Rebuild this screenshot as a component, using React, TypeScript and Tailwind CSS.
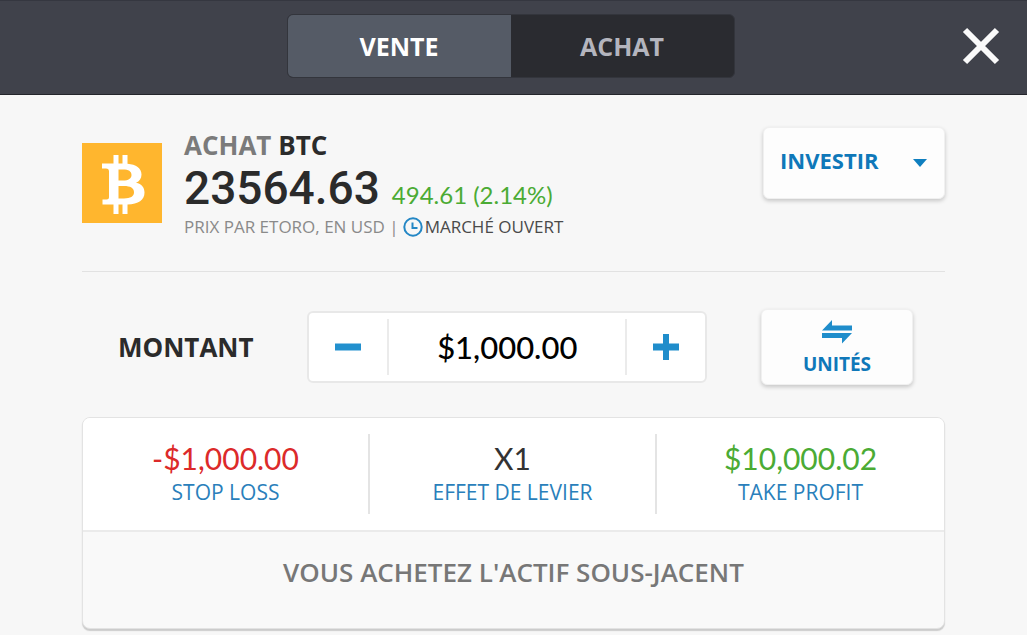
import { useState } from "react";

const LIMITS = [
  { label: "STOP LOSS", value: "-$1,000.00", color: "text-[#dc2a2a]" },
  { label: "EFFET DE LEVIER", value: "X1", color: "text-[#333333]" },
  { label: "TAKE PROFIT", value: "$10,000.02", color: "text-[#4bab34]" },
];

function formatAmount(amount: number) {
  return amount.toLocaleString("en-US", { style: "currency", currency: "USD" });
}

function BitcoinLogo() {
  return (
    <svg viewBox="0 0 80 80" className="mt-4 size-20 shrink-0" aria-label="Bitcoin">
      <rect width="80" height="80" fill="#ffb62e" />
      <path
        fill="#fff"
        fillRule="evenodd"
        d="M20 20.5H31.500V12H36.500V20.500H40.500V12H45.500V20.700C54 21.300 59.500 25.300 59.500 31.500C59.500 35.500 57.500 38.400 54 39.800C59.800 41 62.500 44.500 62.500 49.500C62.500 57 56.500 61.200 45.500 61.500V71H40.500V61.500H36.500V71H31.500V61.500H20.500V56.500H24.500C26.500 56.500 27 55.500 27 54V28.500C27 26.500 26 25.500 24 25.500H20ZM36.500 26.500V37.500H41C46.500 37.500 49.500 35.500 49.500 32C49.500 28.300 46.500 26.500 41 26.500ZM36.500 43V55.500H42C48.500 55.500 52 53.500 52 49.300C52 45 48.500 43 42 43Z"
      />
    </svg>
  );
}

function ClockIcon() {
  return (
    <svg viewBox="0 0 20 20" className="size-5" fill="none" stroke="#2487c5" strokeWidth="2">
      <circle cx="10" cy="10" r="8.700" />
      <path d="M9.500 5.500V11H14.500" />
    </svg>
  );
}

function SwapIcon() {
  return (
    <svg viewBox="0 0 30 24" className="h-6 w-[30px] shrink-0" fill="#1f8dcb">
      <path d="M0 10.500 10 0V5.500H30V10.500Z" />
      <path d="M30 13 20 23.500V18H0V13Z" />
    </svg>
  );
}

export default function App() {
  const [side, setSide] = useState("VENTE");
  const [amount, setAmount] = useState(1000);

  return (
    <div className="min-h-screen bg-[#f7f7f7] font-['Open_Sans',sans-serif] text-[#2b2b2b]">
      <header className="grid h-[95px] grid-cols-[1fr_448px_1fr] items-center border-t border-b border-t-[#353740] border-b-[#24252b] bg-[#40424b] pr-1.5 pb-1">
        <div className="col-start-2 flex h-16 overflow-hidden rounded-md border border-[#33353c] bg-[#2a2b30]">
          {["VENTE", "ACHAT"].map((name) => (
            <button
              key={name}
              type="button"
              onClick={() => setSide(name)}
              className={`flex-1 text-[25px] leading-8 font-bold ${
                side === name ? "bg-[#555b66] text-white" : "text-[#b4b5be]"
              }`}
            >
              {name}
            </button>
          ))}
        </div>
        <button type="button" aria-label="Fermer" className="mr-5 justify-self-end">
          <svg viewBox="0 0 40 40" className="size-10" stroke="#fafafa" strokeWidth="6">
            <path d="M4 4 36 36M36 4 4 36" />
          </svg>
        </button>
      </header>

      <main className="px-[82px] pt-8">
        <section className="flex items-start justify-between border-b border-[#e2e2e2] pb-8">
          <div className="flex items-start gap-[22px]">
            <BitcoinLogo />
            <div className="mt-0.5">
              <h1 className="text-[26px] leading-8 font-bold text-[#7b7b7b]">
                ACHAT <span className="text-[#2b2b2b]">BTC</span>
              </h1>
              <p className="flex items-baseline gap-3 leading-[54px]">
                <span className="font-[Roboto,sans-serif] text-[46px] font-medium">23564.63</span>
                <span className="font-[Lato,sans-serif] text-2xl leading-8 text-[#4bab34]">494.61 (2.14%)</span>
              </p>
              <p className="flex items-center gap-1 text-[17px] leading-6 text-[#8a8a8a]">
                PRIX PAR ETORO, EN USD |
                <span className="flex items-center gap-0.5 text-[#4a4a4a]">
                  <ClockIcon />
                  MARCHÉ OUVERT
                </span>
              </p>
            </div>
          </div>

          <div className="relative">
            <select
              aria-label="Mode"
              className="h-[72px] w-[182px] appearance-none rounded-md border border-[#f0f0f0] bg-[#fdfdfd] pb-1.5 pl-4 text-[22px] font-bold text-[#0f78b9] shadow-[0_2px_4px_rgba(0,0,0,0.2)]"
            >
              <option>INVESTIR</option>
            </select>
            <svg
              viewBox="0 0 14 8"
              className="pointer-events-none absolute top-8 right-[18px] h-2 w-3.5"
              fill="#0f7fbf"
            >
              <path d="M0 0H14L7 8Z" />
            </svg>
          </div>
        </section>

        <section className="flex items-center justify-between pt-[37px] pr-8 pb-8 pl-9">
          <label htmlFor="amount" className="text-[26px] leading-9 font-bold">
            MONTANT
          </label>
          <div className="flex h-[72px] w-[400px] items-center rounded-md border-2 border-[#e8e8e8] bg-white">
            <button
              type="button"
              aria-label="Diminuer"
              onClick={() => setAmount(Math.max(0, amount - 100))}
              className="flex h-full w-[78px] items-center justify-center"
            >
              <svg viewBox="0 0 26 26" className="size-[26px]" fill="#2290ce">
                <path d="M0 9.500H26V16.500H0Z" />
              </svg>
            </button>
            <input
              id="amount"
              type="text"
              readOnly
              value={formatAmount(amount)}
              className="h-14 min-w-0 flex-1 border-x-2 border-[#ebebeb] text-center font-[Lato,sans-serif] text-[31px] font-medium text-black outline-none"
            />
            <button
              type="button"
              aria-label="Augmenter"
              onClick={() => setAmount(amount + 100)}
              className="flex h-full w-[78px] items-center justify-center"
            >
              <svg viewBox="0 0 26 26" className="size-[26px]" fill="#1f8dcb">
                <path d="M10 0H16V9.500H26V16.500H16V26H10V16.500H0V9.500H10Z" />
              </svg>
            </button>
          </div>
          <button
            type="button"
            className="flex h-[76px] w-[152px] flex-col items-center justify-center gap-1.5 rounded-md border border-[#f0f0f0] bg-[#fdfdfd] pt-1 text-[19px] leading-7 font-bold text-[#0f78b9] shadow-[0_2px_4px_rgba(0,0,0,0.2)]"
          >
            <SwapIcon />
            UNITÉS
          </button>
        </section>

        <section className="overflow-hidden rounded-lg border border-[#e3e3e3] bg-[#f9f9f9] shadow-[0_2px_1px_#cccccc]">
          <div className="grid grid-cols-3 divide-x-2 divide-[#e4e4e4] border-b-2 border-[#ebebeb] bg-white py-4">
            {LIMITS.map((item) => (
              <button key={item.label} type="button" className="flex h-20 flex-col items-center pt-1">
                <span className={`font-[Lato,sans-serif] text-[30px] leading-10 ${item.color}`}>
                  {item.value}
                </span>
                <span className="text-[21px] leading-7 text-[#2a7fbb]">{item.label}</span>
              </button>
            ))}
          </div>
          <p className="pt-4 pb-8 text-center text-[26px] leading-[48px] font-semibold text-[#777777]">
            VOUS ACHETEZ L'ACTIF SOUS-JACENT
          </p>
        </section>
      </main>
    </div>
  );
}
